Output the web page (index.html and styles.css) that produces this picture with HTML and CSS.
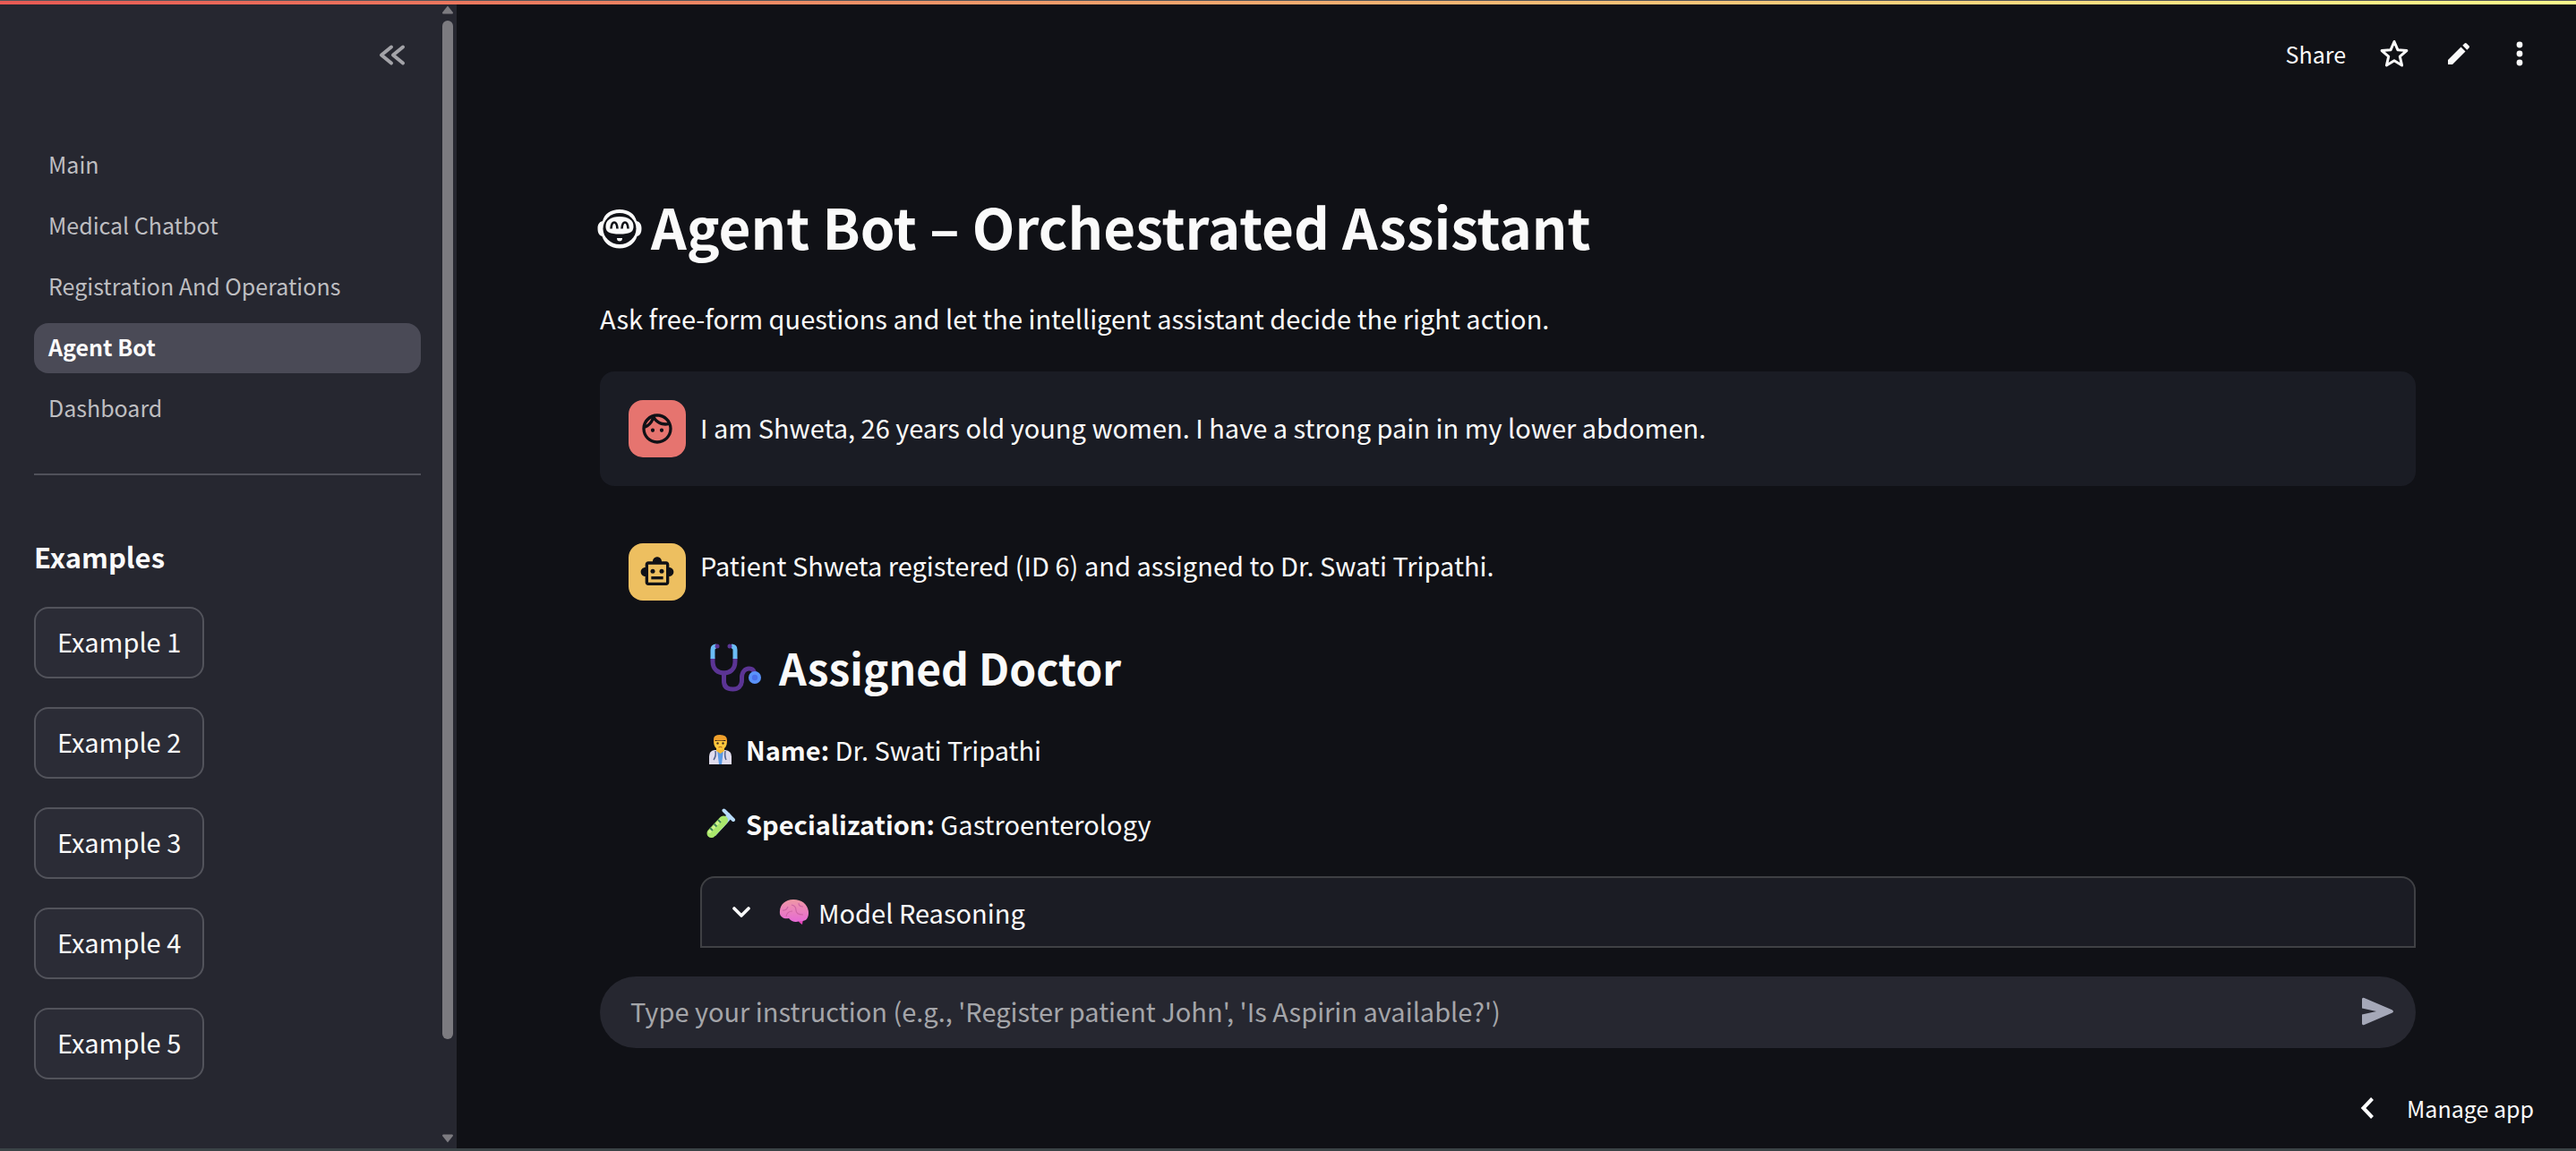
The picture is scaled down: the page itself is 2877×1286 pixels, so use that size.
FILE: index.html
```html
<!DOCTYPE html>
<html lang="en">
<head>
<meta charset="utf-8">
<title>Agent Bot</title>
<link rel="stylesheet" href="styles.css">
</head>
<body>
<div class="decoration"></div>
<div class="app">
  <aside class="sidebar">
    <div class="sidebar-content">
      <div class="sidebar-header">
        <button class="icon-button" aria-label="Collapse sidebar">
          <svg width="40" height="40" viewBox="0 0 40 40" fill="none" stroke="#a3a3a8" stroke-width="4" stroke-linecap="round" stroke-linejoin="round"><path d="M19 11.500l-11 9 11 9M32 11.500l-11 9 11 9"/></svg>
        </button>
      </div>
      <nav class="nav">
        <a href="#main">Main</a>
        <a href="#medical">Medical Chatbot</a>
        <a href="#registration">Registration And Operations</a>
        <a href="#agent" class="active" aria-current="page">Agent Bot</a>
        <a href="#dashboard">Dashboard</a>
      </nav>
      <hr class="divider">
      <h2 class="sidebar-title">Examples</h2>
      <div class="examples">
        <button class="example">Example 1</button>
        <button class="example">Example 2</button>
        <button class="example">Example 3</button>
        <button class="example">Example 4</button>
        <button class="example">Example 5</button>
      </div>
    </div>
    <div class="scrollbar" aria-hidden="true">
      <svg width="12" height="10" viewBox="0 0 12 10" fill="#7c7b80"><path d="M6 0.500L12 8Q12 9.500 11 9.500H1Q0 9.500 0 8Z"/></svg>
      <div class="track"><div class="thumb"></div></div>
      <svg width="12" height="10" viewBox="0 0 12 10" fill="#7c7b80"><path d="M6 9.500L12 2Q12 0.500 11 0.500H1Q0 0.500 0 2Z"/></svg>
    </div>
  </aside>

  <div class="page">
    <header class="toolbar">
      <button class="text-button">Share</button>
      <button class="icon-button" aria-label="Favorite">
        <svg width="36" height="36" viewBox="0 0 36 36" fill="none" stroke="#fafafa" stroke-width="3" stroke-linejoin="round"><path d="M18 4.500l3.900 9.200 10 .9-7.600 6.600 2.300 9.800-8.600-5.200-8.600 5.200 2.300-9.800-7.600-6.600 10-.9z"/></svg>
      </button>
      <button class="icon-button" aria-label="Edit">
        <svg width="36" height="36" viewBox="0 0 36 36" fill="#fafafa"><path d="M6 25L20.500 10.500L25.500 15.500L11 30H6Z"/><path d="M22.300 8.700L24.600 6.500Q25.700 5.500 26.800 6.500L29.500 9.200Q30.500 10.300 29.500 11.400L27.300 13.700Z"/></svg>
      </button>
      <button class="icon-button" aria-label="More options">
        <svg width="28" height="36" viewBox="0 0 28 36" fill="#fafafa"><circle cx="14" cy="8" r="3.400"/><circle cx="14" cy="18" r="3.400"/><circle cx="14" cy="28" r="3.400"/></svg>
      </button>
    </header>

    <main class="content">
      <h1 class="title">
        <svg class="title-icon" width="50" height="52" viewBox="0 -8 50 52"><path fill="#fafafa" d="M25 0C35 0 42 5 44 13C48 14 49.500 17 49.500 21C49.500 26 48 29 44.500 30C42 38 35 43.500 25 43.500C15 43.500 8 38 5.500 30C2 29 .5 26 .5 21C.5 17 2 14 6 13C8 5 15 0 25 0Z"/><ellipse cx="25" cy="21.500" rx="18.500" ry="17.500" fill="#101116"/><path fill="#fafafa" d="M25 8C35 8 40.500 12 40.500 19C40.500 25 37 27.500 25 27.500C13 27.500 9.500 25 9.500 19C9.500 12 15 8 25 8Z"/><path d="M15.500 21.500Q16 14.500 19 14.500T22.500 21.500M27.500 21.500Q28 14.500 31 14.500T34.500 21.500" fill="none" stroke="#101116" stroke-width="2.600"/><path fill="#fafafa" d="M22 32h6q0 3.500-3 3.500t-3-3.500z"/></svg>
        <span>Agent Bot – Orchestrated Assistant</span>
      </h1>
      <p class="subtitle">Ask free-form questions and let the intelligent assistant decide the right action.</p>

      <section class="message user">
        <div class="avatar avatar-user">
          <svg width="40" height="40" viewBox="0 0 24 24" fill="#101116"><path d="M10.250 13c0 .69-.56 1.250-1.250 1.250S7.750 13.690 7.750 13s.56-1.250 1.250-1.250 1.250.56 1.250 1.250zM15 11.750c-.69 0-1.250.56-1.250 1.250s.56 1.250 1.250 1.250 1.250-.56 1.250-1.250-.56-1.250-1.250-1.250zm7 .25c0 5.520-4.480 10-10 10S2 17.520 2 12 6.480 2 12 2s10 4.480 10 10zM10.660 4.120C12.060 6.440 14.600 8 17.500 8c.46 0 .91-.05 1.340-.12C17.440 5.560 14.900 4 12 4c-.46 0-.91.05-1.340.12zM4.420 9.470c1.710-.97 3.030-2.550 3.660-4.440C6.370 6 5.050 7.580 4.420 9.470zM20 12c0-.78-.12-1.530-.33-2.240-.7.15-1.420.24-2.170.24-3.130 0-5.920-1.440-7.760-3.690C8.690 8.870 6.600 10.880 4 11.860c.01.04 0 .09 0 .14 0 4.420 3.580 8 8 8s8-3.580 8-8z"/></svg>
        </div>
        <div class="message-body"><p>I am Shweta, 26 years old young women. I have a strong pain in my lower abdomen.</p></div>
      </section>

      <section class="message">
        <div class="avatar avatar-bot">
          <svg width="40" height="40" viewBox="0 0 24 24" fill="#101116"><path d="M20 9V7c0-1.100-.9-2-2-2h-3c0-1.660-1.340-3-3-3S9 3.340 9 5H6c-1.100 0-2 .9-2 2v2c-1.660 0-3 1.340-3 3s1.340 3 3 3v4c0 1.100.9 2 2 2h12c1.100 0 2-.9 2-2v-4c1.660 0 3-1.340 3-3s-1.340-3-3-3zm-2 10H6V7h12v12z"/><circle cx="9" cy="11.500" r="1.500"/><circle cx="15" cy="11.500" r="1.500"/><path d="M8 15h8v2H8z"/></svg>
        </div>
        <div class="message-body">
          <p>Patient Shweta registered (ID 6) and assigned to Dr. Swati Tripathi.</p>
          <h3 class="section-title">
            <svg width="76" height="56" viewBox="0 -2 76 56" fill="none" stroke-linecap="round"><path d="M14 17V20C14 29 20 33 26.500 33S39 29 39 20V17" stroke="#5b3494" stroke-width="5"/><path d="M26.500 33V42C26.500 49 31 51 36.500 51S46.500 48 46.500 41V38C46.500 32 50 28 54.500 28S61 31 61 35" stroke="#5b3494" stroke-width="5"/><path d="M14 17V7Q14 3 18 3M39 17V7Q39 3 35 3" stroke="#6bbcf5" stroke-width="5" stroke-linecap="butt"/><circle cx="19" cy="3" r="2.500" fill="#5b3494"/><circle cx="33" cy="3" r="2.500" fill="#5b3494"/><circle cx="61" cy="38" r="7" fill="#5a92fa"/><circle cx="61" cy="38" r="3.200" fill="#4a70ea"/></svg>
            <span>Assigned Doctor</span>
          </h3>
          <p class="field">
            <svg width="40" height="34" viewBox="0 0 40 34"><path fill="#e0dced" d="M10 34V25Q10 19 16 18H28Q35 19 35 25V34Z"/><path fill="#5c9be5" d="M19 18H26L24 34H21Z"/><path fill="#f5b932" d="M18 14H27V19L22.500 22L18 19Z"/><path fill="#ffc83d" d="M15 8Q15 17 22.500 18Q30 17 30 8Z"/><path fill="#f0a02c" d="M15 11V6Q15 1 22 1Q30 1 30 7V11L28 7Q20 8 17 7Z"/><circle cx="19.500" cy="10.500" r="1.200" fill="#43301f"/><circle cx="25.500" cy="10.500" r="1.200" fill="#43301f"/><path d="M20.500 15Q22.500 14 24.500 15" stroke="#a35218" fill="none"/><path d="M17 19Q18 25 15 29M28 19Q27 25 29 29" stroke="#51628f" stroke-width="1.500" fill="none"/></svg>
            <span><strong>Name:</strong> Dr. Swati Tripathi</span>
          </p>
          <p class="field">
            <svg width="40" height="34" viewBox="0 0 40 34"><path d="M12 28L25 12L32 5L36 10L30 17L17 31" fill="#a9d3f0"/><path d="M12.500 28L26 13.500" stroke="#a9e86b" stroke-width="10" stroke-linecap="round"/><path d="M10.500 26.500L22 14" stroke="#d0f58f" stroke-width="3" stroke-linecap="round"/><path d="M26.500 2.500L37 13" stroke="#b8dcfb" stroke-width="4" stroke-linecap="round"/><path d="M11 22l3 3M15.500 17.500l3 3M20 13l3 3" stroke="#418659" stroke-width="2"/></svg>
            <span><strong>Specialization:</strong> Gastroenterology</span>
          </p>
          <button class="expander" aria-expanded="true">
            <svg width="32" height="32" viewBox="0 0 32 32" fill="none" stroke="#fafafa" stroke-width="3.600" stroke-linecap="round" stroke-linejoin="round"><path d="M8 12l8 8 8-8"/></svg>
            <svg class="brain" width="36" height="32" viewBox="0 0 36 32"><defs><linearGradient id="brain" x1="0" y1="0" x2="0" y2="1"><stop offset="0" stop-color="#ef98a5"/><stop offset="1" stop-color="#e66ad5"/></linearGradient></defs><path fill="#e344b8" d="M21 23L28 24L27 30Q23 28 21 23Z"/><path fill="url(#brain)" d="M2 18C1 9 7 2 17 2C27 2 34 8 34 17C34 24 30 27 24 26C20 28 15 27 12 23C7 24 3 22 2 18Z"/><path d="M9 21Q10 15 16 15M15 8Q20 9 20 14T28 19M28 10Q23 10 23 6M5 14Q9 15 11 10" stroke="#ce65a5" stroke-width="1.200" fill="none"/></svg>
            <span>Model Reasoning</span>
          </button>
        </div>
      </section>
    </main>

    <footer class="footer">
      <form class="chat-input">
        <input type="text" aria-label="Instruction" placeholder="Type your instruction (e.g., 'Register patient John', 'Is Aspirin available?')">
        <button type="button" class="icon-button" aria-label="Send">
          <svg width="40" height="40" viewBox="0 0 40 40" fill="#a5a8b8"><path d="M2 5.500Q2 3 4.500 4L35.500 17.200Q38.500 19 35.500 20.800L4.500 34Q2 35 2 32.500V22.500L18 19L2 15.500Z"/></svg>
        </button>
      </form>
      <button class="manage">
        <svg width="16" height="24" viewBox="0 0 16 24" fill="none" stroke="#fff" stroke-width="4"><path d="M13.500 1.500L3.500 12L13.500 22.500"/></svg>
        <span>Manage app</span>
      </button>
    </footer>
  </div>
</div>
</body>
</html>
```
FILE: styles.css
```css
* {
  box-sizing: border-box;
}

body {
  margin: 0;
  min-height: 100vh;
  display: flex;
  flex-direction: column;
  background: #101116;
  border-top: 1px solid #56575a;
  border-bottom: 3px solid #3a4346;
  color: #fafafa;
  font-family: "Noto Sans CJK SC", "Noto Sans", sans-serif;
  font-size: 29px;
  line-height: 48px;
}

button,
input {
  font: inherit;
  color: inherit;
  background: none;
  border: 0;
  padding: 0;
}

h1,
h2,
h3,
p {
  margin: 0;
}

svg {
  display: block;
  flex: none;
}

.decoration {
  height: 4px;
  background: linear-gradient(90deg, #e85a54, #fffd8c);
}

.app {
  flex: 1;
  display: flex;
}

/* Sidebar */
.sidebar {
  flex: 0 0 510px;
  display: flex;
  background: #262730;
}

.sidebar-content {
  flex: 1;
  padding: 0 24px 72px 38px;
}

.sidebar-header {
  display: flex;
  justify-content: flex-end;
  padding: 36px 12px 76px 0;
}

.nav {
  display: flex;
  flex-direction: column;
  gap: 12px;
}

.nav a {
  padding: 2px 16px 6px;
  border-radius: 16px;
  color: #bebec1;
  font-size: 25px;
  text-decoration: none;
}

.nav a.active {
  background: #4a4a56;
  color: #fafafa;
  font-weight: 700;
}

.divider {
  height: 2px;
  margin: 44px 0 67px;
  border: 0;
  background: #50515a;
}

.sidebar-title {
  font-size: 31px;
}

.examples {
  display: flex;
  flex-direction: column;
  align-items: flex-start;
  gap: 32px;
  margin-top: 32px;
}

.example {
  padding: 12px 24px 16px;
  border: 2px solid #52535b;
  border-radius: 16px;
  background: #2b2c36;
}

.scrollbar {
  display: flex;
  flex-direction: column;
  gap: 7px;
  width: 16px;
  padding: 1px 4px 6px 0;
}

.track {
  flex: 1;
}

.thumb {
  height: 92%;
  border-radius: 6px;
  background: #7c7b80;
}

/* Page */
.page {
  flex: 1;
  display: flex;
  flex-direction: column;
}

.toolbar {
  display: flex;
  justify-content: flex-end;
  align-items: center;
  gap: 36px;
  padding: 31px 49px 0 0;
}

.text-button {
  font-size: 25px;
}

.content {
  padding: 124px 179px 0 160px;
}

.title {
  display: flex;
  align-items: center;
  gap: 10px;
  margin-left: -3px;
  font-size: 62px;
  line-height: 88px;
}

.subtitle {
  margin: 35px 0 36px;
}

.message {
  display: flex;
  gap: 16px;
  padding: 32px 0 0 32px;
  border-radius: 16px;
}

.message.user {
  padding: 32px;
  margin-bottom: 32px;
  background: #1a1c24;
}

.message.user .message-body {
  padding-top: 6px;
}

.avatar {
  flex: none;
  display: grid;
  place-items: center;
  width: 64px;
  height: 64px;
  border-radius: 16px;
}

.avatar-user {
  background: #e6746f;
}

.avatar-bot {
  background: #edbf60;
}

.message-body {
  flex: 1;
}

.section-title {
  display: flex;
  align-items: center;
  gap: 12px;
  margin: 56px 0 34px;
  font-size: 48px;
  line-height: 68px;
}

.field {
  display: flex;
  align-items: center;
  gap: 11px;
  margin-bottom: 35px;
}

.expander {
  display: flex;
  align-items: center;
  width: 100%;
  padding: 14px 28px;
  border: 2px solid #3f4044;
  border-radius: 16px 16px 0 0;
  background: #1b1c24;
}

.brain {
  margin: 0 9px 0 25px;
}

/* Footer */
.footer {
  display: flex;
  flex-direction: column;
  margin-top: auto;
  padding: 32px 47px 21px 160px;
}

.chat-input {
  display: flex;
  align-items: center;
  margin-right: 132px;
  padding: 16px 22px 16px 34px;
  border-radius: 40px;
  background: #262730;
}

.chat-input input {
  flex: 1;
  height: 48px;
  padding-bottom: 4px;
  outline: 0;
}

.chat-input input::placeholder {
  color: #a4a5a9;
  opacity: 1;
}

.manage {
  display: flex;
  align-items: center;
  align-self: flex-end;
  gap: 36px;
  margin-top: 43px;
  font-size: 25px;
}
```
